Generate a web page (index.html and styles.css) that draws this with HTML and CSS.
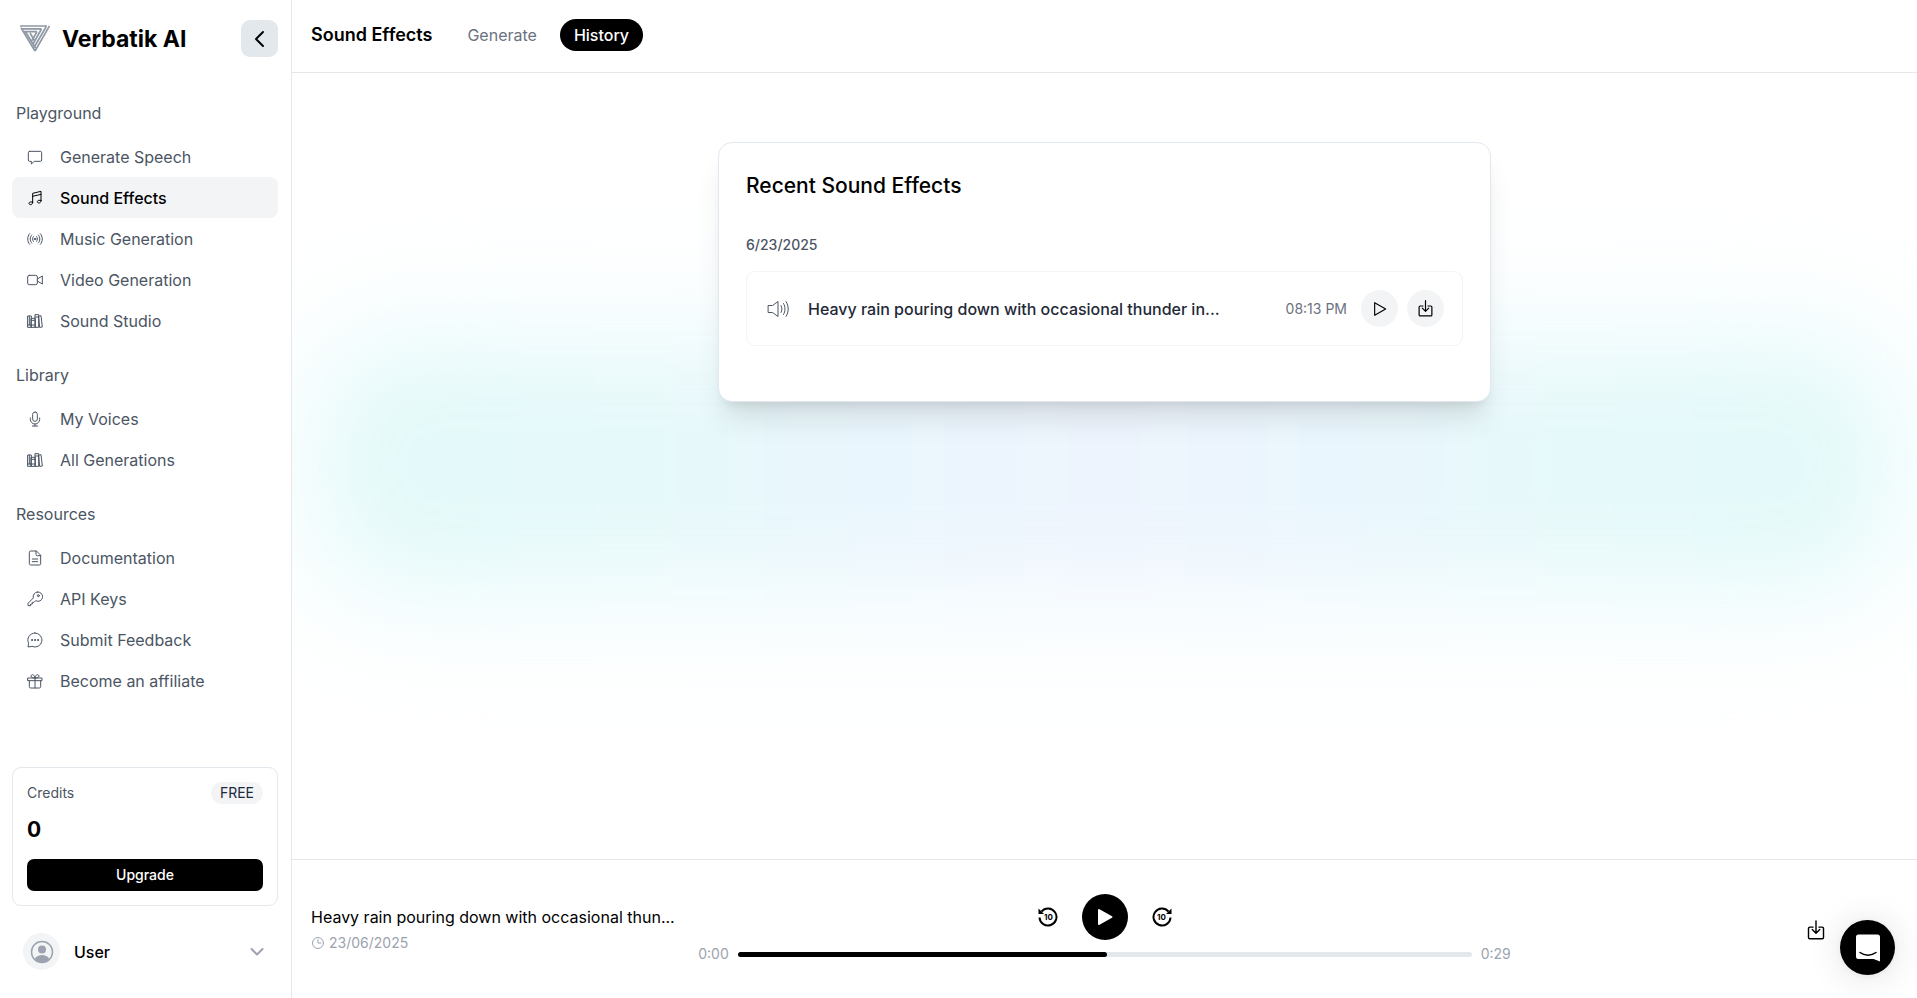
FILE: index.html
```html
<!DOCTYPE html>
<html lang="en">
<head>
    <meta charset="UTF-8">
    <title>Verbatik AI - Sound Effects</title>
    <meta name="viewport" content="width=device-width, initial-scale=1.0">
    <link rel="stylesheet" href="styles.css">
</head>
<body>
    <!-- shared icons -->
    <svg class="sprite" aria-hidden="true">
        <symbol id="i-books" viewBox="0 0 24 24">
            <path d="M1.500 4.500h5v17h-5zM6.500 8h6v13.500h-6zM12.500 2.500h5v19h-5zM1.500 18h5M6.500 11h6M6.500 18h6M12.500 6h5M18 4.600l3-.6 2 17-3.500.500zM3.500 4.500v13.500"/>
        </symbol>
        <symbol id="i-download" viewBox="0 0 24 24">
            <path d="M8.500 8.500H4.500a1.500 1.500 0 0 0-1.500 1.500v11a1.500 1.500 0 0 0 1.500 1.500h15a1.500 1.500 0 0 0 1.500-1.500V10a1.500 1.500 0 0 0-1.500-1.500h-4M12 1v15M7.500 11.500l4.500 4.500 4.500-4.500"/>
        </symbol>
    </svg>

    <div class="app">
        <aside class="sidebar">
            <div class="brand">
                <svg class="brand-logo" viewBox="0 0 30 27">
                    <path d="M0 1h27M2 3.800h19.500M4 6.600h13M29.500 1L15 26M26 2L14 22.500M21.500 4l-8.500 15M17 6.600l-5 8.900M1 2.800L15 26M5.500 6.600L15.500 23M10 8l5 8.500"/>
                </svg>
                <span class="brand-name">Verbatik AI</span>
                <button class="collapse" type="button" aria-label="Collapse sidebar">
                    <svg width="20" height="20" viewBox="0 0 20 20"><path d="M13 3L6 10l7 7" stroke-width="2"/></svg>
                </button>
            </div>

            <nav class="nav">
                <h2>Playground</h2>
                <ul>
                    <li><a href="#"><svg viewBox="0 0 24 24"><path d="M4 3.500h16a2 2 0 0 1 2 2v11a2 2 0 0 1-2 2h-9L6.500 22.500v-4H4a2 2 0 0 1-2-2v-11a2 2 0 0 1 2-2z"/></svg>Generate Speech</a></li>
                    <li><a href="#" class="active"><svg viewBox="0 0 24 24"><path d="M8.500 18.500V5L21 2v14M8.500 9.500L21 6.500M8.500 18.500c0 2-1.300 3.500-3 3.500S3 21 3 20s1-2 2.500-2h3M21 16c0 2-1.300 3.500-3 3.500s-2.500-1-2.500-2 1-2 2.500-2h3"/></svg>Sound Effects</a></li>
                    <li><a href="#"><svg viewBox="0 0 24 24"><path d="M4 4c-4 4.500-4 11.500 0 16M7 6c-3 3.500-3 8.500 0 12M9.500 8.500c-1.500 2-1.500 5 0 7M20 4c4 4.500 4 11.500 0 16M17 6c3 3.500 3 8.500 0 12M14.500 8.500c1.500 2 1.500 5 0 7"/><circle cx="12" cy="12" r="1" fill="currentColor"/></svg>Music Generation</a></li>
                    <li><a href="#"><svg viewBox="0 0 24 24"><rect x="1" y="5" width="14.500" height="14" rx="2.500"/><path d="M15.500 10.500L23 6v12l-7.500-4.500"/></svg>Video Generation</a></li>
                    <li><a href="#"><svg><use href="#i-books"/></svg>Sound Studio</a></li>
                </ul>

                <h2>Library</h2>
                <ul>
                    <li><a href="#"><svg viewBox="0 0 24 24"><rect x="8.500" y="1.500" width="7" height="14" rx="3.500"/><path d="M5 10.500v2a7 7 0 0 0 14 0v-2M12 19.500v3M8 22.500h8"/></svg>My Voices</a></li>
                    <li><a href="#"><svg><use href="#i-books"/></svg>All Generations</a></li>
                </ul>

                <h2>Resources</h2>
                <ul>
                    <li><a href="#"><svg viewBox="0 0 24 24"><path d="M13.500 1.500H5.500A2 2 0 0 0 3.500 3.500v17a2 2 0 0 0 2 2h13a2 2 0 0 0 2-2V8.500zM13.500 1.500v5a2 2 0 0 0 2 2h5M8 13.500h8M8 17.500h8"/></svg>Documentation</a></li>
                    <li><a href="#"><svg viewBox="0 0 24 24"><path d="M15.500 1.500a7 7 0 1 1-2.500 13L10.500 17H8v2.500H5.500V22H1.500v-3.500l8-8a7 7 0 0 1 6-9z"/><circle cx="17" cy="7" r="1.500"/></svg>API Keys</a></li>
                    <li><a href="#"><svg viewBox="0 0 24 24"><path d="M12 1.500a10.500 10.500 0 1 1-4.500 20L1.500 22.500l1-5.500A10.500 10.500 0 0 1 12 1.500z"/><g fill="currentColor"><circle cx="7.500" cy="12" r=".8"/><circle cx="12" cy="12" r=".8"/><circle cx="16.500" cy="12" r=".8"/></g></svg>Submit Feedback</a></li>
                    <li><a href="#"><svg viewBox="0 0 24 24"><path d="M1.500 7.500h21v4h-21zM3.500 11.500v9a2 2 0 0 0 2 2h13a2 2 0 0 0 2-2v-9M12 7.500v15M12 7.500C10 7.500 6 7 6 4.500S11 1 12 7.500c1-6.500 6-5.500 6-3s-4 3-6 3"/></svg>Become an affiliate</a></li>
                </ul>
            </nav>

            <section class="credits">
                <div class="credits-top">
                    <span>Credits</span>
                    <span class="plan">FREE</span>
                </div>
                <p class="credits-count">0</p>
                <button class="upgrade" type="button">Upgrade</button>
            </section>

            <button class="user" type="button">
                <span class="avatar">
                    <svg width="24" height="24" viewBox="0 0 24 24">
                        <circle cx="12" cy="12" r="10.500"/>
                        <circle cx="12" cy="9.500" r="4" class="solid"/>
                        <path d="M4.500 19c2-3 4.500-4 7.500-4s5.500 1 7.500 4A10.500 10.500 0 0 1 4.500 19z" class="solid"/>
                    </svg>
                </span>
                <span class="user-name">User</span>
                <svg class="chevron" width="14" height="14" viewBox="0 0 14 14"><path d="M1.500 4L7 9.500 12.500 4"/></svg>
            </button>
        </aside>

        <div class="page">
            <header class="topbar">
                <h1>Sound Effects</h1>
                <a href="#" class="tab">Generate</a>
                <a href="#" class="tab current">History</a>
            </header>

            <main class="content">
                <div class="glow"></div>
                <section class="card">
                    <h2>Recent Sound Effects</h2>
                    <h3>6/23/2025</h3>
                    <div class="item">
                        <svg class="speaker" width="23" height="20" viewBox="0 0 23 20"><path d="M1.500 6.500h4L11 2.500v15L5.500 13.500h-4zM14 6.500c1.200 2 1.200 5 0 7M16.500 4.500c2 3.300 2 7.700 0 11M19 2.500c3 4.500 3 10.500 0 15"/></svg>
                        <span class="item-title">Heavy rain pouring down with occasional thunder in...</span>
                        <time>08:13 PM</time>
                        <button class="round" type="button" aria-label="Play">
                            <svg width="16" height="16" viewBox="0 0 24 24"><path d="M4 2.500L20.500 12 4 21.500z"/></svg>
                        </button>
                        <button class="round" type="button" aria-label="Download">
                            <svg width="17" height="17"><use href="#i-download"/></svg>
                        </button>
                    </div>
                </section>
            </main>

            <footer class="player">
                <div class="track">
                    <p class="track-title">Heavy rain pouring down with occasional thun...</p>
                    <p class="track-date">
                        <svg width="14" height="14" viewBox="0 0 14 14"><circle cx="7" cy="7" r="5.500"/><path d="M7 3.500V7h3"/></svg>
                        23/06/2025
                    </p>
                </div>
                <div class="transport">
                    <div class="buttons">
                        <button class="skip" type="button" aria-label="Back 10 seconds">
                            <svg width="20" height="20" viewBox="0 0 20 20">
                                <path d="M3.500 4.500A8.500 8.500 0 1 1 1.500 10.500"/>
                                <path d="M.5 1.500v5.500H6z" class="solid"/>
                                <text x="10.500" y="13">10</text>
                            </svg>
                        </button>
                        <button class="play" type="button" aria-label="Play">
                            <svg width="18" height="20" viewBox="0 0 18 20"><path d="M3 3v14l12.500-7z"/></svg>
                        </button>
                        <button class="skip" type="button" aria-label="Forward 10 seconds">
                            <svg width="20" height="20" viewBox="0 0 20 20">
                                <path d="M16.500 4.500A8.500 8.500 0 1 0 18.500 10.500"/>
                                <path d="M19.500 1.500v5.500H14z" class="solid"/>
                                <text x="9.500" y="13">10</text>
                            </svg>
                        </button>
                    </div>
                    <div class="timeline">
                        <span>0:00</span>
                        <input type="range" min="0" max="100" value="50" aria-label="Seek">
                        <span>0:29</span>
                    </div>
                </div>
                <div class="extra">
                    <button class="save" type="button" aria-label="Download">
                        <svg width="20" height="22"><use href="#i-download"/></svg>
                    </button>
                </div>
            </footer>
        </div>
    </div>

    <button class="chat" type="button" aria-label="Open chat">
        <svg width="26" height="28" viewBox="0 0 26 28">
            <path class="bubble" d="M3.500.5h19A2.500 2.500 0 0 1 25 3v24.500l-6.500-2.500h-15A2.500 2.500 0 0 1 1 22.500V3A2.500 2.500 0 0 1 3.500.5z"/>
            <path d="M5 18.500c4.500 3.500 11.500 3.500 16 0"/>
        </svg>
    </button>
</body>
</html>
```
FILE: styles.css
```css
* {
    box-sizing: border-box;
}
html, body {
    height: 100%;
    margin: 0;
}
body {
    font-family: Inter, Arial, sans-serif;
    font-size: 16px;
    line-height: 24px;
    color: #000;
    background: #fff;
}
h1, h2, h3, p, ul {
    margin: 0;
    padding: 0;
}
ul {
    list-style: none;
}
a {
    color: inherit;
    text-decoration: none;
}
button {
    font: inherit;
    color: inherit;
    padding: 0;
    border: 0;
    background: none;
    cursor: pointer;
}
svg {
    flex-shrink: 0;
    fill: none;
    stroke: currentColor;
    stroke-linecap: round;
    stroke-linejoin: round;
}
.solid {
    fill: currentColor;
    stroke: none;
}
.sprite {
    display: none;
}
.app {
    display: flex;
    min-height: 100vh;
}

/* Sidebar */
.sidebar {
    width: 292px;
    flex-shrink: 0;
    display: flex;
    flex-direction: column;
    padding: 20px 13px 28px 12px;
    border-right: 1px solid #e5e7eb;
}
.brand {
    display: flex;
    align-items: center;
    padding-left: 8px;
    margin-bottom: 44px;
}
.brand-logo {
    width: 30px;
    height: 27px;
    color: #8f98a4;
    stroke-width: 1.7;
    stroke-linecap: butt;
}
.brand-name {
    flex: 1;
    margin-left: 12px;
    font-size: 23px;
    font-weight: 700;
}
.collapse {
    display: flex;
    align-items: center;
    justify-content: center;
    width: 37px;
    height: 37px;
    border-radius: 9px;
    background: #e2e8ec;
}
.nav {
    flex: 1;
    color: #4b5563;
}
.nav h2 {
    padding-left: 4px;
    margin-bottom: 11px;
    font-size: 16px;
    font-weight: 400;
}
.nav ul {
    margin-bottom: 22px;
}
.nav a {
    display: flex;
    align-items: center;
    gap: 17px;
    height: 41px;
    padding-left: 15px;
    border-radius: 8px;
}
.nav svg {
    width: 16px;
    height: 16px;
    stroke-width: 1.5;
}
.nav a.active {
    color: #000;
    font-weight: 500;
    background: #f3f4f6;
}
.credits {
    padding: 14px;
    border: 1px solid #e2e8ec;
    border-radius: 9px;
}
.credits-top {
    display: flex;
    align-items: center;
    justify-content: space-between;
    font-size: 14px;
    line-height: 22px;
    color: #4b5563;
}
.plan {
    padding: 0 9px;
    border-radius: 11px;
    color: #1f2937;
    background: #f3f4f6;
}
.credits-count {
    margin: 10px 0 13px;
    font-size: 21px;
    line-height: 32px;
    font-weight: 700;
}
.upgrade {
    display: block;
    width: 100%;
    height: 32px;
    border-radius: 7px;
    font-size: 14px;
    font-weight: 500;
    color: #fff;
    background: #000;
}
.user {
    display: flex;
    align-items: center;
    margin-top: 27px;
    padding: 0 14px 0 11px;
    text-align: left;
}
.avatar {
    display: flex;
    align-items: center;
    justify-content: center;
    width: 37px;
    height: 37px;
    border-radius: 50%;
    color: #9ca3af;
    background: #f3f4f6;
}
.avatar svg {
    stroke-width: 1.5;
}
.user-name {
    flex: 1;
    margin-left: 14px;
    font-weight: 500;
}
.chevron {
    color: #9ca3af;
    stroke-width: 2;
}

/* Page */
.page {
    flex: 1;
    min-width: 0;
    display: flex;
    flex-direction: column;
}
.topbar {
    display: flex;
    align-items: center;
    padding: 19px 19px 21px;
    border-bottom: 1px solid #e5e7eb;
}
.topbar h1 {
    margin-right: 21px;
    font-size: 18px;
    font-weight: 600;
}
.tab {
    padding: 4px 14px;
    margin-right: 9px;
    border-radius: 16px;
    color: #6b7280;
}
.tab.current {
    color: #fff;
    font-weight: 500;
    background: #000;
}
.content {
    position: relative;
    flex: 1;
    overflow: hidden;
    padding: 69px 28px;
}
/* soft colour wash behind the card */
.glow {
    position: absolute;
    top: 35%;
    left: 2%;
    right: 2%;
    height: 30%;
    border-radius: 80px;
    background: linear-gradient(90deg, #e2f9f9, #e6f9fa 20%, #eaf6fd 36%, #eef4fd 50%, #eaf6fd 64%, #e6f9fa 80%, #e2f9f9);
    box-shadow: 0 0 60px 70px #fafeff;
    filter: blur(50px);
}
.card {
    position: relative;
    max-width: 773px;
    margin: 0 auto;
    padding: 29px 27px 55px;
    border: 1px solid #e2e8f0;
    border-radius: 14px;
    background: #fff;
    box-shadow: 0 23px 29px -6px rgba(0, 0, 0, 0.1), 0 9px 12px -7px rgba(0, 0, 0, 0.1);
}
.card h2 {
    font-size: 21px;
    line-height: 28px;
    font-weight: 500;
}
.card h3 {
    margin: 33px 0 14px;
    font-size: 14px;
    font-weight: 500;
    color: #4b5563;
}
.item {
    display: flex;
    align-items: center;
    height: 75px;
    padding: 0 18px 0 20px;
    border: 1px solid #f3f4f6;
    border-radius: 9px;
}
.speaker {
    color: #4b5563;
}
.item-title {
    flex: 1;
    margin-left: 18px;
    font-weight: 500;
    color: #1f2937;
}
.item time {
    margin-right: 5px;
    font-size: 14px;
    color: #6b7280;
}
.round {
    display: flex;
    align-items: center;
    justify-content: center;
    width: 37px;
    height: 37px;
    margin-left: 9px;
    border-radius: 50%;
    background: #f3f4f6;
}
.round svg,
.save svg {
    stroke-width: 1.7;
}

/* Player */
.player {
    display: grid;
    grid-template-columns: 1fr 2fr 1fr;
    align-items: center;
    height: 139px;
    padding-top: 2px;
    border-top: 1px solid #e5e7eb;
}
.track {
    padding-left: 19px;
}
.track-date {
    display: flex;
    align-items: center;
    gap: 4px;
    margin-top: 2px;
    font-size: 14px;
    color: #9ca3af;
}
.buttons {
    display: flex;
    align-items: center;
    justify-content: center;
    gap: 12px;
}
.skip {
    display: flex;
    padding: 12px;
}
.skip svg {
    stroke-width: 2;
    stroke-linecap: butt;
}
.skip text {
    font-size: 8px;
    font-weight: 700;
    text-anchor: middle;
    fill: currentColor;
    stroke: none;
}
.play {
    display: flex;
    align-items: center;
    justify-content: center;
    width: 46px;
    height: 46px;
    border-radius: 50%;
    color: #fff;
    background: #000;
}
.play svg {
    fill: currentColor;
    stroke-width: 2;
}
.timeline {
    display: flex;
    align-items: center;
    gap: 9px;
    margin-top: 2px;
    font-size: 14px;
    color: #9ca3af;
}
.timeline input {
    flex: 1;
    min-width: 0;
    height: 5px;
    margin: 0;
    appearance: none;
    border-radius: 3px;
    background: linear-gradient(90deg, #000 50%, #e2e8ec 50%);
}
.timeline input::-webkit-slider-thumb {
    appearance: none;
    width: 5px;
    height: 5px;
    border-radius: 50%;
    background: #000;
}
.extra {
    display: flex;
    justify-content: flex-end;
    padding-right: 91px;
}
.save {
    display: flex;
}

/* Chat launcher */
.chat {
    position: fixed;
    right: 22px;
    bottom: 23px;
    display: flex;
    align-items: center;
    justify-content: center;
    width: 55px;
    height: 55px;
    border-radius: 50%;
    background: #000;
    box-shadow: 0 1px 7px rgba(0, 0, 0, 0.06), 0 2px 36px rgba(0, 0, 0, 0.12);
}
.chat svg {
    stroke-width: 1.5;
}
.chat .bubble {
    fill: #fff;
    stroke: none;
}
```
